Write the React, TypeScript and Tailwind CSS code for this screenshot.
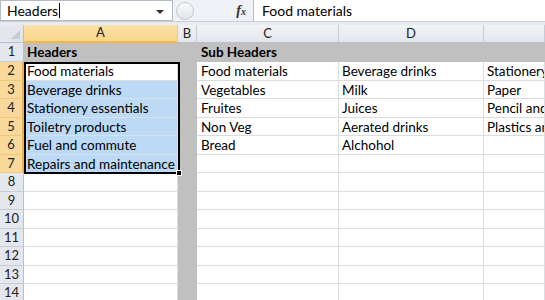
import React from "react";

const font = { fontFamily: "Lato, 'Open Sans', sans-serif" };

type Row = { a?: string; c?: string; d?: string; e?: string };

const rows: Row[] = [
    { a: "Headers", c: "Sub Headers" },
    { a: "Food materials", c: "Food materials", d: "Beverage drinks", e: "Stationery essentials" },
    { a: "Beverage drinks", c: "Vegetables", d: "Milk", e: "Paper" },
    { a: "Stationery essentials", c: "Fruites", d: "Juices", e: "Pencil and pens" },
    { a: "Toiletry products", c: "Non Veg", d: "Aerated drinks", e: "Plastics and rubber" },
    { a: "Fuel and commute", c: "Bread", d: "Alchohol" },
    { a: "Repairs and maintenance" },
    {}, {}, {}, {}, {}, {}, {},
];

const FormulaBar = () => (
    <div className="flex h-[22px] items-stretch bg-[#eef1f5] border-b border-[#c9ced6]">
        <div className="relative flex w-[173px] items-center bg-white border border-[#b6bcc6] pl-[6px] text-[14px] text-black">
            <span>Headers</span>
            <span className="ml-[1px] h-[15px] w-[1px] bg-black" />
            <span className="absolute right-[8px] top-[9px] h-0 w-0 border-x-[4px] border-t-[4px] border-x-transparent border-t-[#333]" />
        </div>
        <div className="flex w-[80px] items-center pl-[3px]">
            <div className="h-[18px] w-[18px] rounded-full border border-[#c3c8cf] bg-gradient-to-b from-[#fafbfc] to-[#e2e5ea]" />
            <div className="flex-1" />
            <span className="mr-[7px] font-bold italic text-[14px] text-[#333]" style={{ fontFamily: "'Liberation Serif', serif" }}>
                f<span className="text-[10px]">x</span>
            </span>
        </div>
        <div className="flex flex-1 items-center bg-white border-l border-[#b6bcc6] pl-[8px] text-[14px] text-black">
            Food materials
        </div>
    </div>
);

const ColHeader = ({ label, selected, className }: { label: string; selected?: boolean; className?: string }) => (
    <div
        className={
            (selected
                ? "bg-gradient-to-b from-[#fbe2a8] to-[#f8d58a] border-b-2 border-b-[#f1b84a] "
                : "bg-gradient-to-b from-[#f1f3f6] to-[#e2e6ec] border-b border-b-[#b8bfc9] ") +
            "flex items-center justify-center border-r border-[#c5ccd6] text-[13px] text-[#222] " +
            (className ?? "")
        }
    >
        {label}
    </div>
);

const App: React.FC = () => {
    return (
        <div className="h-[300px] w-[545px] overflow-hidden bg-white" style={font}>
            <FormulaBar />
            <div className="h-[3px] bg-[#e8ebf0]" />
            <div className="relative grid grid-cols-[24px_154px_19px_142px_145px_1fr] grid-rows-[18px_19px_repeat(13,18.5px)]">
                <div className="relative bg-[#e3e7ed] border-r border-b border-[#b8bfc9]">
                    <span className="absolute bottom-[3px] right-[3px] h-0 w-0 border-b-[9px] border-l-[9px] border-b-[#c6ccd4] border-l-transparent" />
                </div>
                <ColHeader label="A" selected />
                <ColHeader label="B" />
                <ColHeader label="C" />
                <ColHeader label="D" />
                <ColHeader label="E" className="text-transparent" />

                {rows.map((r, i) => {
                    const n = i + 1;
                    const sel = n >= 2 && n <= 7;
                    const headerRow = n === 1;
                    const cell = "overflow-hidden whitespace-nowrap pl-[3px] text-[13.5px] leading-[18px] text-black ";
                    const grid = headerRow ? "bg-[#c0c0c0] font-bold " : "bg-white border-r border-b border-[#dadcdd] ";
                    return (
                        <React.Fragment key={n}>
                            <div
                                className={
                                    (sel
                                        ? "bg-[#f9d99b] border-r-2 border-r-[#eeb050] border-b border-b-[#f0c878] "
                                        : "bg-[#e4e8ee] border-r border-r-[#b8bfc9] border-b border-b-[#c7ced8] ") +
                                    "flex items-center justify-center text-[13px] text-[#222]"
                                }
                            >
                                {n}
                            </div>
                            <div
                                className={
                                    cell +
                                    (headerRow
                                        ? grid
                                        : n >= 3 && n <= 7
                                        ? "bg-[#bcd9f6] border-r border-b border-[#d4e2ef] "
                                        : grid)
                                }
                            >
                                {r.a}
                            </div>
                            <div className="bg-[#c0c0c0]" />
                            <div className={cell + grid + "pl-[4px]"}>{r.c}</div>
                            <div className={cell + grid}>{r.d}</div>
                            <div className={cell + grid}>{r.e}</div>
                        </React.Fragment>
                    );
                })}

                <div className="pointer-events-none absolute left-[24px] top-[37px] h-[112px] w-[156px] border-2 border-black">
                    <span className="absolute -bottom-[4px] -right-[4px] h-[6px] w-[6px] border border-white bg-black" />
                </div>
            </div>
        </div>
    );
};

export default App;
